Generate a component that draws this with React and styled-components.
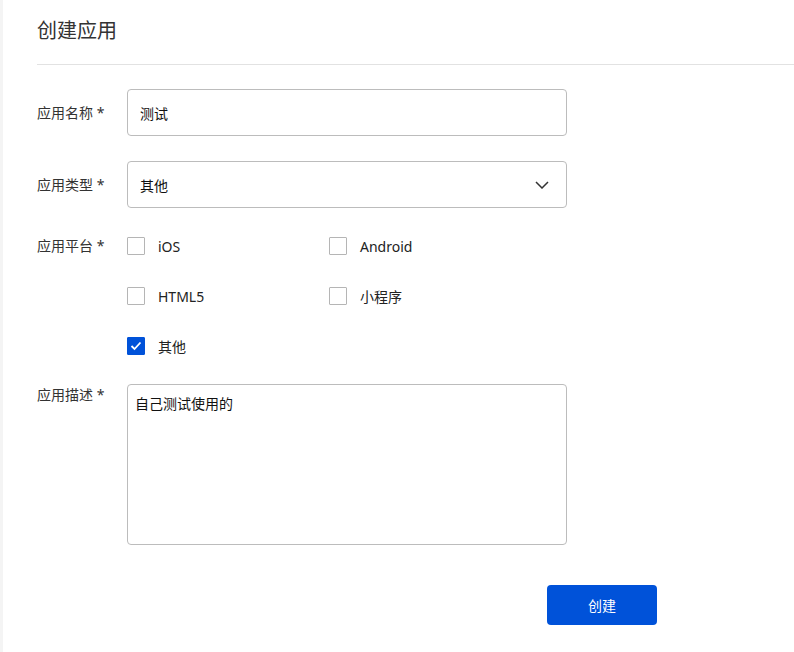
import React, { useState } from 'react'
import styled, { createGlobalStyle } from 'styled-components'

const Global = createGlobalStyle`
  html, body {
    margin: 0;
    padding: 0;
    background: #fff;
  }
  body {
    font-family: "Noto Sans", "Noto Sans CJK SC", sans-serif;
    color: #222;
  }
`

const Page = styled.div`
  width: 794px;
  height: 652px;
  box-sizing: border-box;
  border-left: 3px solid #f4f4f4;
  padding-left: 34px;
  overflow: hidden;
`

const Header = styled.div`
  height: 65px;
  display: flex;
  align-items: center;
  border-bottom: 1px solid #e2e2e2;
  box-sizing: border-box;
  padding-bottom: 5px;
`

const Title = styled.h1`
  margin: 0;
  font-size: 20px;
  font-weight: 400;
  color: #333;
  font-family: "Noto Sans CJK SC", sans-serif;
`

const Form = styled.form`
  display: flex;
  flex-direction: column;
  gap: 25px;
  padding-top: 24px;
`

const Row = styled.div`
  display: flex;
  align-items: flex-start;
`

const Label = styled.label`
  width: 90px;
  flex-shrink: 0;
  font-size: 14px;
  color: #333;
  line-height: ${p => p.$lh}px;
`

const Control = styled.div`
  width: 440px;
`

const Input = styled.input`
  width: 100%;
  height: 47px;
  box-sizing: border-box;
  border: 1px solid #bcbcbc;
  border-radius: 4px;
  padding: 0 12px;
  font-family: inherit;
  font-size: 14px;
  color: #111;
  outline: none;
`

const SelectBox = styled.div`
  height: 47px;
  box-sizing: border-box;
  border: 1px solid #bcbcbc;
  border-radius: 4px;
  padding: 0 17px 0 12px;
  display: flex;
  align-items: center;
  justify-content: space-between;
  font-size: 14px;
  color: #111;
`

const CheckGrid = styled.div`
  display: grid;
  grid-template-columns: 202px 202px;
  grid-auto-rows: 26px;
  row-gap: 24px;
`

const CheckItem = styled.label`
  display: flex;
  align-items: center;
  gap: 13px;
  font-size: 14px;
  color: #222;
`

const Box = styled.span`
  width: 18px;
  height: 18px;
  box-sizing: border-box;
  border: 1px solid ${p => (p.$on ? '#0052d9' : '#b5b5b5')};
  background: ${p => (p.$on ? '#0052d9' : '#fff')};
  border-radius: 1px;
  display: flex;
  align-items: center;
  justify-content: center;
`

const TextArea = styled.textarea`
  width: 100%;
  height: 161px;
  box-sizing: border-box;
  border: 1px solid #bcbcbc;
  border-radius: 4px;
  padding: 9px 7px;
  font-family: inherit;
  font-size: 14px;
  line-height: 20px;
  color: #111;
  resize: none;
  outline: none;
  display: block;
`

const Actions = styled.div`
  padding-left: 510px;
  padding-top: 15px;
`

const Button = styled.button`
  width: 110px;
  height: 40px;
  border: none;
  border-radius: 4px;
  background: #0052d9;
  color: #fff;
  font-family: inherit;
  font-size: 14px;
  cursor: pointer;
`

const platforms = [
  { name: 'iOS', checked: false },
  { name: 'Android', checked: false },
  { name: 'HTML5', checked: false },
  { name: '小程序', checked: false },
  { name: '其他', checked: true },
]

const Check = ({ on, children }) => (
  <CheckItem>
    <Box $on={on}>
      {on && (
        <svg width="12" height="10" viewBox="0 0 12 10">
          <polyline points="1.5,5 4.5,8 10.5,1.5" fill="none" stroke="#fff" strokeWidth="1.8" />
        </svg>
      )}
    </Box>
    {children}
  </CheckItem>
)

export default function App() {
  const [name, setName] = useState('测试')
  const [desc, setDesc] = useState('自己测试使用的')

  return (
    <Page>
      <Global />
      <Header>
        <Title>创建应用</Title>
      </Header>
      <Form onSubmit={e => e.preventDefault()}>
        <Row>
          <Label $lh={47}>应用名称 *</Label>
          <Control>
            <Input value={name} onChange={e => setName(e.target.value)} />
          </Control>
        </Row>
        <Row>
          <Label $lh={47}>应用类型 *</Label>
          <Control>
            <SelectBox>
              <span>其他</span>
              <svg width="14" height="8" viewBox="0 0 14 8">
                <polyline points="1,1 7,7 13,1" fill="none" stroke="#333" strokeWidth="1.5" />
              </svg>
            </SelectBox>
          </Control>
        </Row>
        <Row>
          <Label $lh={26}>应用平台 *</Label>
          <CheckGrid>
            {platforms.map(p => (
              <Check key={p.name} on={p.checked}>{p.name}</Check>
            ))}
          </CheckGrid>
        </Row>
        <Row>
          <Label $lh={22}>应用描述 *</Label>
          <Control>
            <TextArea value={desc} onChange={e => setDesc(e.target.value)} />
          </Control>
        </Row>
        <Actions>
          <Button type="submit">创建</Button>
        </Actions>
      </Form>
    </Page>
  )
}
